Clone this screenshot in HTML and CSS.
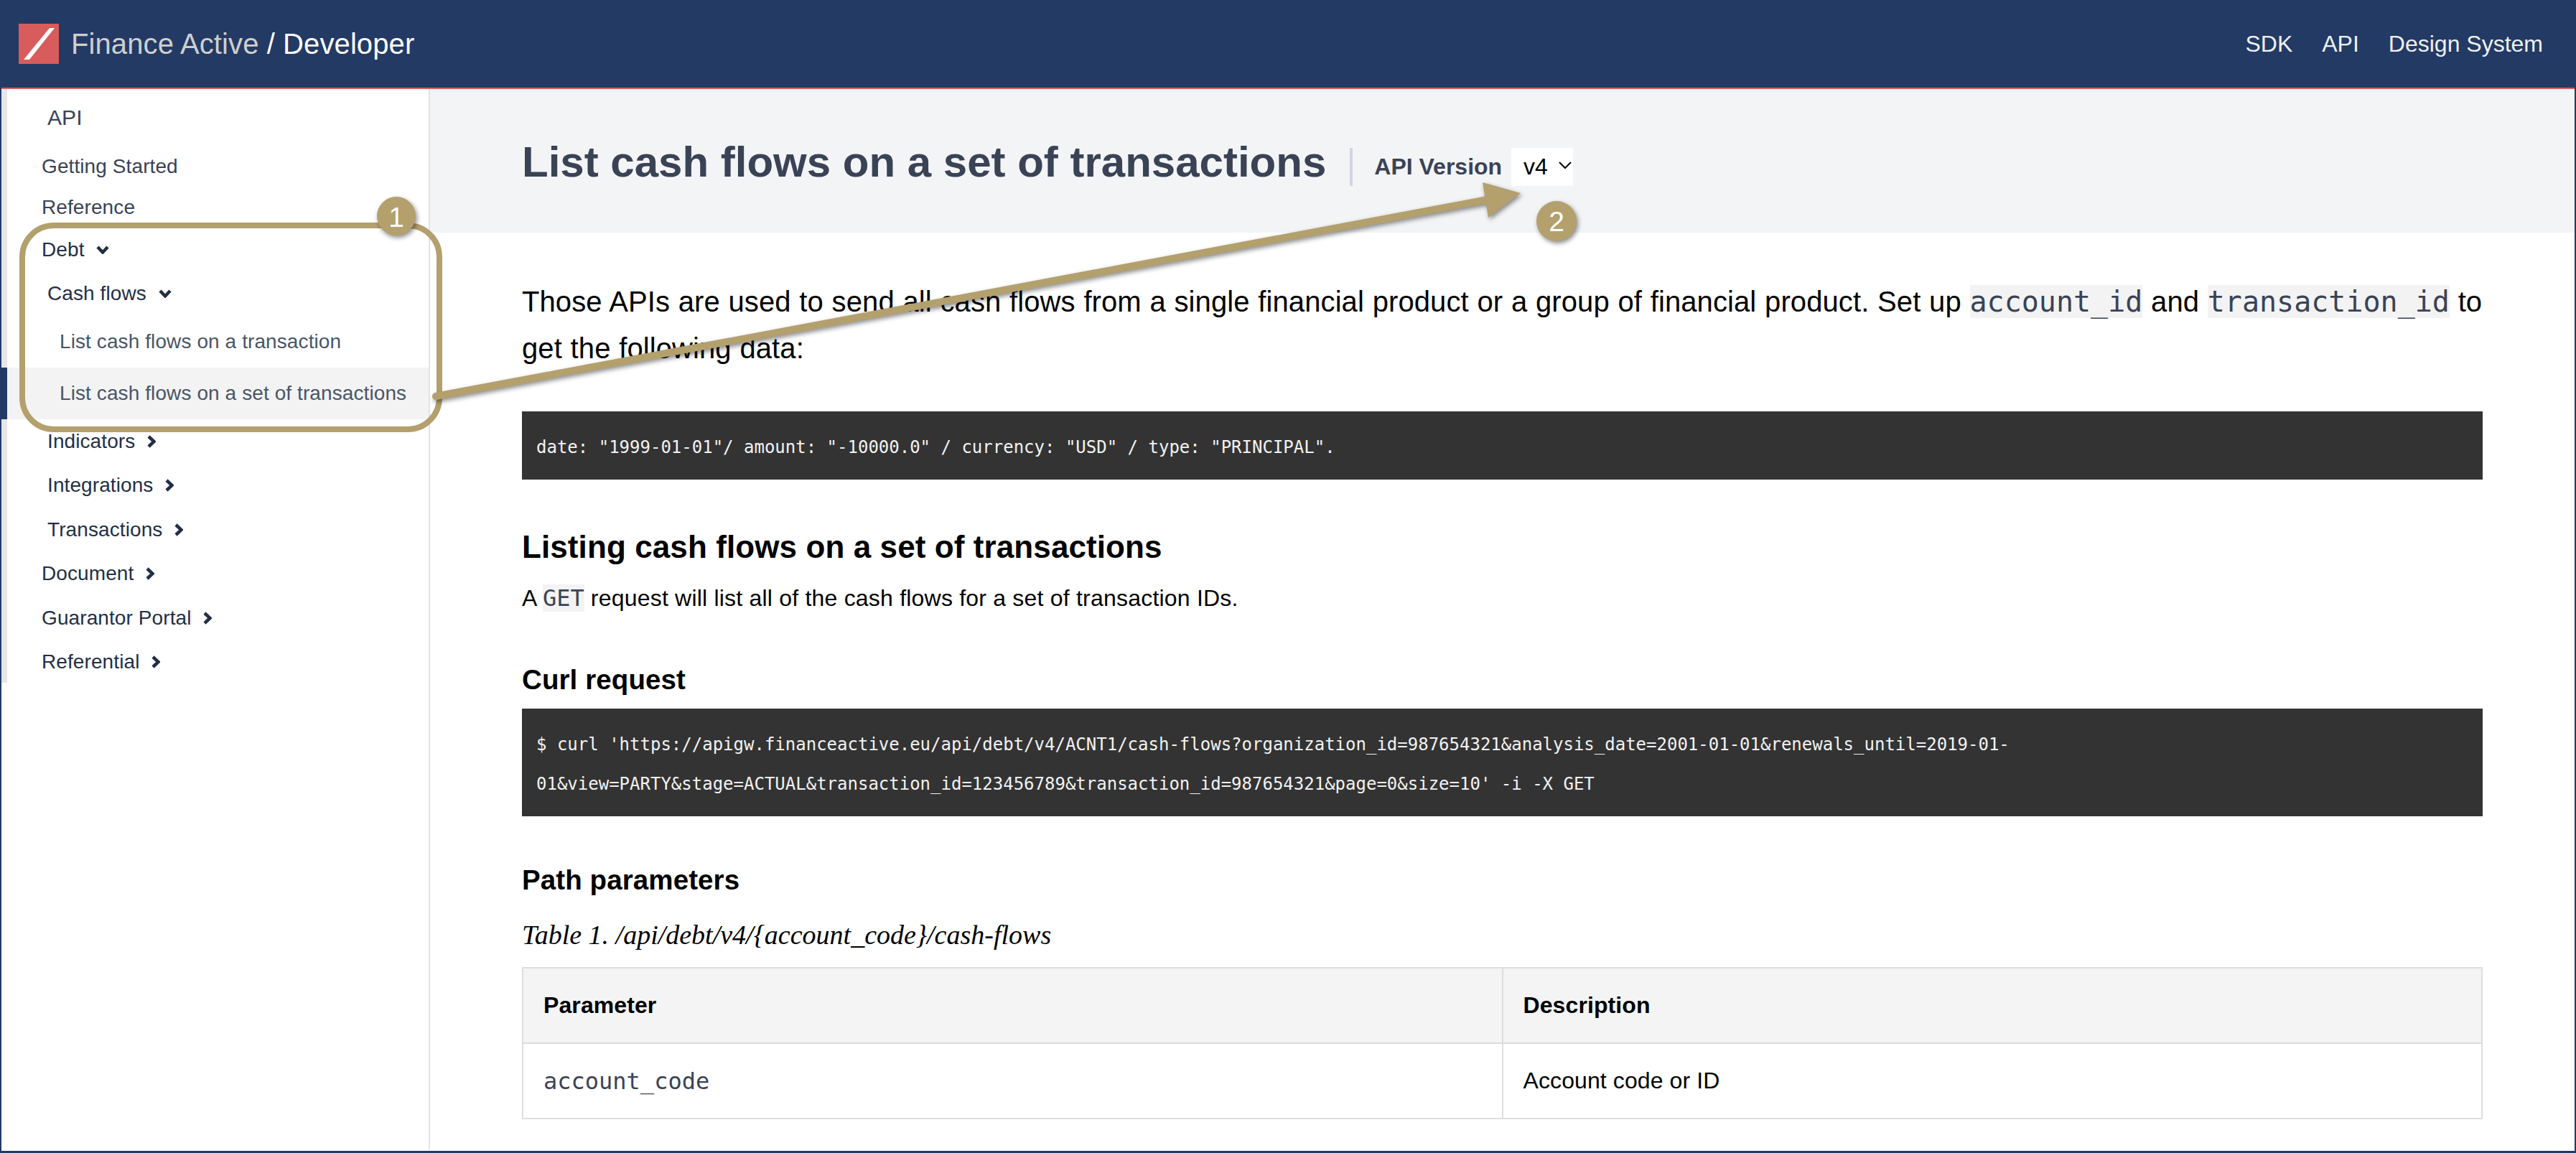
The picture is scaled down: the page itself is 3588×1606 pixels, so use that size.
FILE: index.html
```html
<!DOCTYPE html>
<html lang="en">
<head>
    <meta charset="UTF-8">
    <title>Finance Active / Developer</title>
    <link rel="stylesheet" href="styles.css">
</head>
<body>

<div class="header">
    <div class="brand">
        <svg class="logo" viewBox="0 0 56 56"><rect width="56" height="56" fill="#d95c5c"/><polygon points="43,6 50,6 15,50 7,50" fill="#fff"/></svg>
        <span class="brand-name">Finance Active</span>
        <span class="brand-section">&nbsp;/ Developer</span>
    </div>
    <div class="top-links">
        <a>SDK</a>
        <a>API</a>
        <a>Design System</a>
    </div>
</div>

<div class="page">
    <div class="sidebar">
        <div class="side-title">API</div>
        <div class="side-link first">Getting Started</div>
        <div class="side-link second">Reference</div>
        <div class="side-link dark">Debt <svg class="chev-down" viewBox="0 0 18 12"><polyline points="2,2 9,9.5 16,2"/></svg></div>
        <div class="side-link dark sub">Cash flows <svg class="chev-down" viewBox="0 0 18 12"><polyline points="2,2 9,9.5 16,2"/></svg></div>
        <div class="side-page">List cash flows on a transaction</div>
        <div class="side-page active">List cash flows on a set of transactions</div>
        <div class="side-link dark sub">Indicators <svg class="chev-right" viewBox="0 0 12 18"><polyline points="2,2 9.5,9 2,16"/></svg></div>
        <div class="side-link dark sub">Integrations <svg class="chev-right" viewBox="0 0 12 18"><polyline points="2,2 9.5,9 2,16"/></svg></div>
        <div class="side-link dark sub">Transactions <svg class="chev-right" viewBox="0 0 12 18"><polyline points="2,2 9.5,9 2,16"/></svg></div>
        <div class="side-link dark">Document <svg class="chev-right" viewBox="0 0 12 18"><polyline points="2,2 9.5,9 2,16"/></svg></div>
        <div class="side-link dark">Guarantor Portal <svg class="chev-right" viewBox="0 0 12 18"><polyline points="2,2 9.5,9 2,16"/></svg></div>
        <div class="side-link dark">Referential <svg class="chev-right" viewBox="0 0 12 18"><polyline points="2,2 9.5,9 2,16"/></svg></div>
    </div>

    <div class="main">
        <div class="title-band">
            <h1>List cash flows on a set of transactions</h1>
            <div class="divider"></div>
            <span class="version-label">API Version</span>
            <div class="version-select">v4 <svg viewBox="0 0 18 11"><polyline points="1,1 9,9 17,1"/></svg></div>
        </div>

        <div class="content">
            <p class="intro">Those APIs are used to send all cash flows from a single financial product or a group of financial product. Set up <code>account_id</code> and <code>transaction_id</code> to<br>get the following data:</p>
            <pre class="block-one">date: "1999-01-01"/ amount: "-10000.0" / currency: "USD" / type: "PRINCIPAL".</pre>

            <h2>Listing cash flows on a set of transactions</h2>
            <p class="lead">A <code>GET</code> request will list all of the cash flows for a set of transaction IDs.</p>

            <h3>Curl request</h3>
            <pre>$ curl 'https://apigw.financeactive.eu/api/debt/v4/ACNT1/cash-flows?organization_id=987654321&amp;analysis_date=2001-01-01&amp;renewals_until=2019-01-
01&amp;view=PARTY&amp;stage=ACTUAL&amp;transaction_id=123456789&amp;transaction_id=987654321&amp;page=0&amp;size=10' -i -X GET</pre>

            <h3>Path parameters</h3>
            <div class="caption">Table 1. /api/debt/v4/{account_code}/cash-flows</div>
            <table>
                <tr><th>Parameter</th><th>Description</th></tr>
                <tr><td><code>account_code</code></td><td>Account code or ID</td></tr>
            </table>
        </div>
    </div>
</div>

<!-- callouts drawn over the screenshot -->
<svg class="callouts" viewBox="0 0 3588 1606">
    <rect class="callout-box" x="31" y="314" width="581" height="284" rx="44"/>
    <g class="callout-shadow">
        <line class="callout-line" x1="607" y1="552" x2="2072" y2="278"/>
        <polygon class="callout-head" points="2065,254 2118,269 2073,303"/>
    </g>
    <g class="callout-shadow">
        <circle class="callout-dot" cx="552" cy="301" r="27"/>
        <circle class="callout-dot" cx="2168" cy="308" r="28"/>
    </g>
    <text class="callout-num" x="552" y="316">1</text>
    <text class="callout-num" x="2168" y="322">2</text>
</svg>

</body>
</html>
```

FILE: styles.css
```css
body {
    font-family: "Liberation Sans", Arial, sans-serif;
    background-color: #fff;
    margin: 0;
    padding: 0;
    color: #000;
    width: 3588px;
    height: 1606px;
    overflow: hidden;
    position: relative;
    box-sizing: border-box;
    letter-spacing: 0.006em;
    border-left: 2px solid #233a64;
    border-right: 2px solid #233a64;
    border-bottom: 3px solid #233a64;
}

/* Top bar */
.header {
    display: flex;
    align-items: center;
    justify-content: space-between;
    height: 122px;
    box-sizing: content-box;
    background-color: #233a64;
    border-bottom: 2px solid #d95c5c;
    padding: 0 44px 0 24px;
}

.brand {
    display: flex;
    align-items: center;
    font-size: 40px;
    white-space: pre;
}

.logo {
    width: 56px;
    height: 56px;
    margin-right: 17px;
}

.brand-name {
    color: #cfcfcf;
}

.brand-section {
    color: #fff;
}

.top-links {
    display: flex;
    gap: 41px;
    font-size: 32px;
    letter-spacing: 0;
    color: #eef0f5;
}

.page {
    display: flex;
    height: 1477px;
}

/* Sidebar */
.sidebar {
    width: 597px;
    flex-shrink: 0;
    box-sizing: border-box;
    border-right: 2px solid #e2e2e8;
    font-size: 28px;
    color: #3a4356;
    background: linear-gradient(#e6e6ec, #e6e6ec) no-repeat left top / 8px 827px;
}

.side-title {
    height: 80px;
    display: flex;
    align-items: center;
    padding-left: 64px;
    font-size: 30px;
}

.side-link {
    height: 61.5px;
    display: flex;
    align-items: center;
    padding-left: 56px;
    white-space: pre;
}

.side-link.first {
    height: 56px;
}

.side-link.second {
    height: 57px;
}

.side-link.dark {
    color: #232f47;
}

.side-link.sub {
    padding-left: 64px;
}

.side-page {
    height: 72px;
    display: flex;
    align-items: center;
    margin-left: 8px;
    padding-left: 73px;
    color: #4a5568;
}

.side-page.active {
    background-color: #f3f3f3;
    box-shadow: -10px 0 0 #233a64;
}

.chev-down,
.chev-right {
    fill: none;
    stroke: #232f47;
    stroke-width: 4.5;
    margin-left: 9px;
}

.chev-down {
    width: 18px;
    height: 12px;
}

.chev-right {
    width: 12px;
    height: 18px;
}

/* Main column */
.main {
    flex: 1;
    min-width: 0;
}

.title-band {
    display: flex;
    align-items: center;
    height: 200px;
    box-sizing: border-box;
    padding: 82px 128px 65px;
    background-color: #f3f4f6;
    color: #3a4356;
    letter-spacing: 0;
}

h1 {
    font-size: 60px;
    margin: 0 33px 14px 0;
    line-height: 53px;
    white-space: nowrap;
}

.divider {
    width: 4px;
    height: 53px;
    background-color: #d2d5dc;
    margin-right: 30px;
}

.version-label {
    font-size: 32px;
    font-weight: bold;
    margin-right: 13px;
}

.version-select {
    display: flex;
    align-items: center;
    width: 86px;
    height: 53px;
    box-sizing: border-box;
    padding-left: 17px;
    background-color: #fff;
    color: #000;
    font-size: 32px;
    white-space: pre;
}

.version-select svg {
    width: 18px;
    height: 11px;
    margin-left: 6px;
    margin-bottom: 4px;
    fill: none;
    stroke: #000;
    stroke-width: 2;
}

.content {
    padding: 64px 128px 0;
}

p {
    margin: 0;
}

.intro {
    font-size: 40px;
    line-height: 65px;
    word-spacing: 0.5px;
    white-space: nowrap;
}

code {
    font-family: "DejaVu Sans Mono", monospace;
    letter-spacing: 0;
    background-color: #f3f3f3;
    color: #3a4356;
}

.intro code {
    font-size: 40px;
}

pre {
    margin: 15px 0 0;
    padding: 23px 20px 17px;
    background-color: #333;
    color: #f2f2f2;
    font-family: "DejaVu Sans Mono", monospace;
    font-size: 24px;
    letter-spacing: 0;
    line-height: 55px;
}

.block-one {
    margin-top: 55px;
}

h2 {
    font-size: 44px;
    line-height: 50px;
    margin: 69px 0 0;
}

.lead {
    font-size: 32px;
    line-height: 50px;
    margin-top: 21px;
    letter-spacing: 0.0065em;
}

.lead code,
td code {
    font-size: 32px;
    background-color: #f3f3f3;
}

td code {
    background: none;
}

h3 {
    font-size: 38.5px;
    line-height: 50px;
    margin: 64px 0 0;
}

.caption {
    font-family: "Liberation Serif", serif;
    font-style: italic;
    font-size: 38px;
    letter-spacing: 0;
    line-height: 50px;
    margin-top: 26px;
}

table {
    width: 100%;
    table-layout: fixed;
    border-collapse: collapse;
    margin-top: 20px;
    font-size: 32px;
}

th,
td {
    height: 105px;
    box-sizing: border-box;
    border: 2px solid #ddd;
    padding: 0 28px;
    text-align: left;
}

th {
    background-color: #f4f4f4;
}

/* Annotations */
.callouts {
    position: absolute;
    top: 0;
    left: -2px;
    width: 3588px;
    height: 1606px;
    letter-spacing: 0;
    pointer-events: none;
}

.callout-box {
    fill: none;
    stroke: #b3a06d;
    stroke-width: 8;
}

.callout-line {
    stroke: #b3a06d;
    stroke-width: 10;
    stroke-linecap: round;
}

.callout-head,
.callout-dot {
    fill: #b3a06d;
}

.callout-shadow {
    filter: drop-shadow(2px 3px 3px rgba(0, 0, 0, 0.45));
}

.callout-num {
    fill: #fff;
    font-size: 39px;
    text-anchor: middle;
}
```
